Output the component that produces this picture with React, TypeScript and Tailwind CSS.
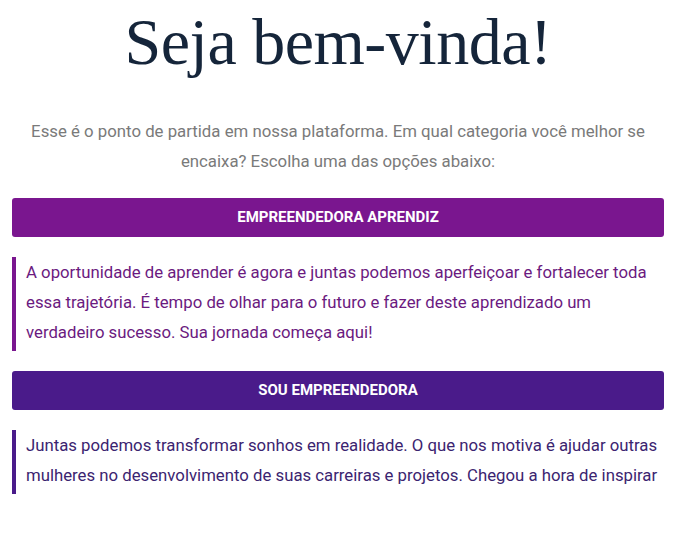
import React from "react";

type Option = {
    label: string;
    text: string;
    tone: "light" | "dark";
};

const options: Option[] = [
    {
        label: "Empreendedora Aprendiz",
        text: "A oportunidade de aprender é agora e juntas podemos aperfeiçoar e fortalecer toda essa trajetória. É tempo de olhar para o futuro e fazer deste aprendizado um verdadeiro sucesso. Sua jornada começa aqui!",
        tone: "light",
    },
    {
        label: "Sou Empreendedora",
        text: "Juntas podemos transformar sonhos em realidade. O que nos motiva é ajudar outras mulheres no desenvolvimento de suas carreiras e projetos. Chegou a hora de inspirar",
        tone: "dark",
    },
];

function OptionBlock({ option }: { option: Option }) {
    const light = option.tone === "light";
    return (
        <div className="flex flex-col">
            <button
                className={
                    light
                        ? "h-[39px] w-full rounded-[3px] bg-[#7a168f] text-[15px] font-bold uppercase text-white"
                        : "h-[39px] w-full rounded-[3px] bg-[#4a1b8a] text-[15px] font-bold uppercase text-white"
                }
            >
                {option.label}
            </button>
            <blockquote
                className={
                    light
                        ? "mt-[20px] border-l-4 border-[#7a168f] pb-[4px] pl-[10px] text-[16.75px] leading-[30px] text-[#6b1a80]"
                        : "mt-[20px] border-l-4 border-[#4a1b8a] pb-[4px] pl-[10px] text-[16.75px] leading-[30px] text-[#3b2470]"
                }
            >
                {option.text}
            </blockquote>
        </div>
    );
}

export default function App() {
    return (
        <div className="min-h-[534px] bg-white font-['Roboto',sans-serif]">
            <div className="ml-3 w-[652px] pt-[4px]">
                <h1 className="text-center font-['Liberation_Serif',serif] text-[66px] leading-[76px] tracking-[-0.5px] text-[#15253a]">
                    Seja bem-vinda!
                </h1>
                <p className="mt-[36px] px-2 text-center text-[16.8px] leading-[30px] text-[#7a7a7a]">
                    Esse é o ponto de partida em nossa plataforma. Em qual categoria você melhor se encaixa? Escolha uma das opções abaixo:
                </p>
                <div className="mt-[22px] flex flex-col gap-[20px]">
                    {options.map((option) => (
                        <OptionBlock key={option.label} option={option} />
                    ))}
                </div>
            </div>
        </div>
    );
}
